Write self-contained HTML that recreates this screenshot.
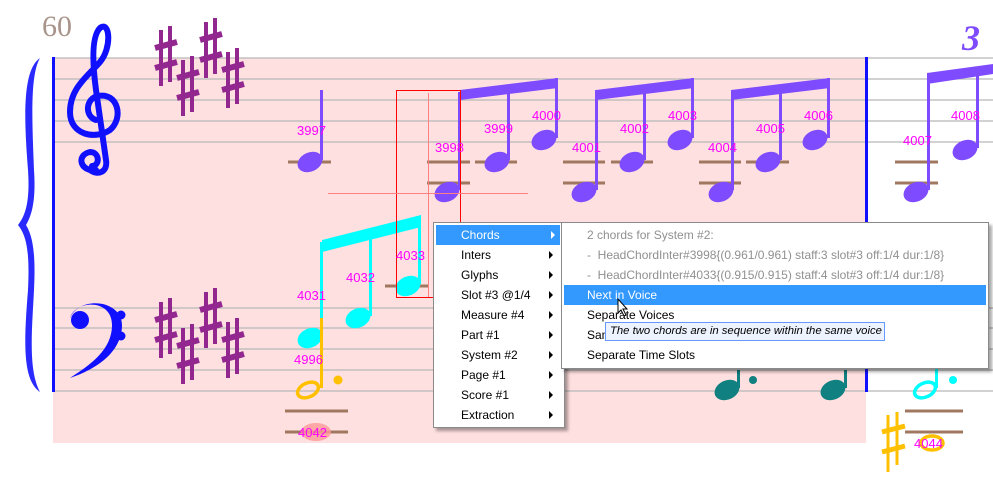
<!DOCTYPE html>
<html><head><style>
body{margin:0;width:993px;height:480px;overflow:hidden;background:#fff;font-family:"Liberation Sans",sans-serif}
svg{position:absolute;left:0;top:0}
.m{position:absolute;background:#fff;border:1px solid #8a8a8a;box-shadow:3px 3px 3px rgba(0,0,0,.35);font-size:12px;color:#000}
.it{position:absolute;height:20px;line-height:20px}
.ar{position:absolute;left:115px;top:6px;width:0;height:0;border-left:4px solid #000;border-top:4px solid transparent;border-bottom:4px solid transparent}
</style></head><body>
<svg width="993" height="480" viewBox="0 0 993 480">
<defs>
<g id="sh"><line x1="6" y1="0" x2="6" y2="56" stroke="#92278f" stroke-width="4"/><line x1="15" y1="-4" x2="15" y2="52" stroke="#92278f" stroke-width="4"/><line x1="0" y1="18" x2="22" y2="12" stroke="#92278f" stroke-width="6"/><line x1="0" y1="38" x2="22" y2="32" stroke="#92278f" stroke-width="6"/></g>
<ellipse id="nh" rx="13" ry="9.5" transform="rotate(-25)"/>
</defs>
<rect x="53" y="58" width="813" height="385" fill="#ffe0e0"/>
<g stroke="#b8b8b8" stroke-width="1.3">
<line x1="53" y1="58" x2="993" y2="58"/><line x1="53" y1="79" x2="993" y2="79"/><line x1="53" y1="100" x2="993" y2="100"/><line x1="53" y1="121" x2="993" y2="121"/><line x1="53" y1="142" x2="993" y2="142"/>
<line x1="53" y1="308" x2="993" y2="308"/><line x1="53" y1="328" x2="993" y2="328"/><line x1="53" y1="349" x2="993" y2="349"/><line x1="53" y1="370" x2="993" y2="370"/><line x1="53" y1="391" x2="993" y2="391"/>
</g>
<rect x="52" y="57" width="3" height="335" fill="#1010ff"/>
<rect x="865" y="57" width="3" height="335" fill="#1010ff"/>
<path d="M40 58 C22 70 24 120 28 170 C30 200 26 215 18 225 C26 235 30 250 28 290 C24 340 22 380 40 392 C28 370 32 330 34 290 C36 250 32 235 26 225 C32 215 36 200 34 170 C32 120 30 75 40 58Z" fill="#2a2aff"/>
<text x="42" y="36" font-family="Liberation Serif" font-size="30" fill="#a8948a">60</text>
<text x="962" y="50" font-family="Liberation Serif" font-size="36" font-weight="bold" font-style="italic" fill="#7f4bff">3</text>
<path d="M96 170 C80 172 76 155 90 152 C100 152 100 166 92 166 M100 28 C110 20 112 48 100 62 C88 76 70 88 70 112 C70 135 95 140 110 130 C124 118 118 92 98 96 C86 98 84 116 96 120 M100 28 C92 36 92 60 96 90 L106 160 C108 172 98 176 90 170" fill="none" stroke="#1010ff" stroke-width="6" stroke-linecap="round"/>
<path d="M70 318 C75 300 112 298 112 325 C112 350 90 365 70 378 C100 368 122 350 122 325 C122 300 80 295 70 318 Z" fill="#1010ff"/>
<circle cx="80" cy="320" r="9" fill="#1010ff"/>
<circle cx="121" cy="315" r="4.5" fill="#1010ff"/><circle cx="121" cy="336" r="4.5" fill="#1010ff"/>
<use href="#sh" x="155" y="30"/><use href="#sh" x="177" y="60"/><use href="#sh" x="200" y="22"/><use href="#sh" x="222" y="52"/>
<use href="#sh" x="155" y="302"/><use href="#sh" x="177" y="328"/><use href="#sh" x="200" y="292"/><use href="#sh" x="222" y="322"/>
<g stroke="#a07860" stroke-width="3">
<line x1="288" y1="162" x2="331" y2="162"/>
<line x1="427" y1="162" x2="470" y2="162"/><line x1="427" y1="183" x2="470" y2="183"/>
<line x1="475" y1="162" x2="517" y2="162"/>
<line x1="563" y1="162" x2="605" y2="162"/><line x1="563" y1="183" x2="605" y2="183"/>
<line x1="611" y1="162" x2="653" y2="162"/>
<line x1="699" y1="162" x2="741" y2="162"/><line x1="699" y1="183" x2="741" y2="183"/>
<line x1="746" y1="162" x2="789" y2="162"/>
<line x1="895" y1="162" x2="938" y2="162"/><line x1="895" y1="183" x2="938" y2="183"/>
<line x1="385" y1="286" x2="428" y2="286"/>
<line x1="285" y1="411" x2="348" y2="411"/><line x1="285" y1="432" x2="348" y2="432"/>
<line x1="905" y1="411" x2="963" y2="411"/><line x1="905" y1="432" x2="963" y2="432"/>
</g>
<g fill="#7f4bff">
<use href="#nh" x="310" y="162"/><rect x="320" y="90" width="3" height="70"/>
<use href="#nh" x="447" y="192"/><rect x="458" y="92" width="3" height="98"/>
<use href="#nh" x="497" y="162"/><rect x="507" y="85" width="3" height="75"/>
<use href="#nh" x="544" y="140"/><rect x="555" y="78" width="3" height="60"/>
<polygon points="460,90 558,78 558,88 460,100"/>
<use href="#nh" x="584" y="192"/><rect x="595" y="90" width="3" height="100"/>
<use href="#nh" x="632" y="162"/><rect x="643" y="85" width="3" height="75"/>
<use href="#nh" x="680" y="140"/><rect x="691" y="78" width="3" height="60"/>
<polygon points="596,90 694,78 694,88 596,100"/>
<use href="#nh" x="721" y="192"/><rect x="731" y="90" width="3" height="100"/>
<use href="#nh" x="768" y="162"/><rect x="779" y="85" width="3" height="75"/>
<use href="#nh" x="815" y="140"/><rect x="827" y="78" width="3" height="60"/>
<polygon points="731,90 830,78 830,88 731,100"/>
<use href="#nh" x="916" y="192"/><rect x="927" y="73" width="3" height="117"/>
<use href="#nh" x="965" y="150"/><rect x="976" y="68" width="3" height="80"/>
<polygon points="927,73 993,64 993,74 927,84"/>
</g>
<g fill="#00ffff">
<use href="#nh" x="310" y="338"/><rect x="320" y="242" width="3" height="78"/>
<use href="#nh" x="358" y="318"/><rect x="369" y="228" width="3" height="88"/>
<use href="#nh" x="408" y="286"/><rect x="418" y="218" width="3" height="66"/>
<polygon points="322,240 421,215 421,227 322,252"/>
<circle cx="953" cy="380" r="4"/>
</g>
<ellipse cx="925" cy="390" rx="11" ry="7" transform="rotate(-25 925 390)" fill="none" stroke="#00ffff" stroke-width="3.5"/>
<rect x="935" y="318" width="3" height="70" fill="#00ffff"/>
<ellipse cx="308" cy="390" rx="11" ry="7" transform="rotate(-25 308 390)" fill="none" stroke="#ffc000" stroke-width="3.5"/>
<rect x="320" y="318" width="3" height="70" fill="#ffc000"/><circle cx="338" cy="380" r="4.5" fill="#ffc000"/>
<ellipse cx="316" cy="432" rx="15" ry="9" fill="#ff9999" opacity=".8"/>
<g stroke="#ffc000"><line x1="888" y1="415" x2="888" y2="472" stroke-width="3"/><line x1="897" y1="412" x2="897" y2="465" stroke-width="3"/><line x1="882" y1="432" x2="905" y2="426" stroke-width="5"/><line x1="882" y1="452" x2="905" y2="446" stroke-width="5"/></g>
<ellipse cx="932" cy="443" rx="11" ry="7" fill="none" stroke="#ffc000" stroke-width="3.5"/>
<g fill="#108080"><use href="#nh" x="727" y="390"/><rect x="737" y="370" width="3" height="18"/><circle cx="753" cy="380" r="4"/>
<use href="#nh" x="833" y="390"/><rect x="844" y="370" width="3" height="18"/></g>
<rect x="396.5" y="90.5" width="64" height="207" fill="none" stroke="#ff0000" stroke-width="1"/>
<line x1="428.5" y1="93" x2="428.5" y2="297" stroke="#ff8080"/>
<line x1="328" y1="193.5" x2="528" y2="193.5" stroke="#ff8080"/>
<g font-size="13" fill="#ff00ff">
<text x="297" y="135">3997</text><text x="435" y="152">3998</text><text x="484" y="133">3999</text><text x="532" y="120">4000</text>
<text x="572" y="152">4001</text><text x="620" y="133">4002</text><text x="668" y="120">4003</text>
<text x="708" y="152">4004</text><text x="756" y="133">4005</text><text x="804" y="120">4006</text>
<text x="903" y="145">4007</text><text x="951" y="120">4008</text>
<text x="297" y="300">4031</text><text x="346" y="282">4032</text><text x="396" y="260">4033</text>
<text x="294" y="364">4996</text><text x="298" y="437">4042</text><text x="914" y="448">4044</text>
</g>
</svg>
<div class="m" style="left:433px;top:222px;width:130px;height:204px">
<div class="it" style="left:2px;top:2px;width:124px;background:#3399ff;color:#fff"><span style="margin-left:25px">Chords</span><div class="ar" style="border-left-color:#fff"></div></div>
<div class="it" style="left:27px;top:22px;width:100px">Inters<div class="ar" style="left:88px"></div></div>
<div class="it" style="left:27px;top:42px;width:100px">Glyphs<div class="ar" style="left:88px"></div></div>
<div class="it" style="left:27px;top:62px;width:100px">Slot #3 @1/4<div class="ar" style="left:88px"></div></div>
<div class="it" style="left:27px;top:82px;width:100px">Measure #4<div class="ar" style="left:88px"></div></div>
<div class="it" style="left:27px;top:102px;width:100px">Part #1<div class="ar" style="left:88px"></div></div>
<div class="it" style="left:27px;top:122px;width:100px">System #2<div class="ar" style="left:88px"></div></div>
<div class="it" style="left:27px;top:142px;width:100px">Page #1<div class="ar" style="left:88px"></div></div>
<div class="it" style="left:27px;top:162px;width:100px">Score #1<div class="ar" style="left:88px"></div></div>
<div class="it" style="left:27px;top:182px;width:100px">Extraction<div class="ar" style="left:88px"></div></div>
</div>
<div class="m" style="left:561px;top:222px;width:426px;height:145px">
<div class="it" style="left:25px;top:2px;color:#909090;white-space:nowrap">2 chords for System #2:</div>
<div class="it" style="left:25px;top:22px;color:#909090;white-space:nowrap">-&nbsp; HeadChordInter#3998{(0.961/0.961) staff:3 slot#3 off:1/4 dur:1/8}</div>
<div class="it" style="left:25px;top:42px;color:#909090;white-space:nowrap">-&nbsp; HeadChordInter#4033{(0.915/0.915) staff:4 slot#3 off:1/4 dur:1/8}</div>
<div class="it" style="left:2px;top:62px;width:422px;background:#3399ff;color:#fff"><span style="margin-left:23px">Next in Voice</span></div>
<div class="it" style="left:25px;top:82px">Separate Voices</div>
<div class="it" style="left:25px;top:102px">Same</div>
<div class="it" style="left:25px;top:122px">Separate Time Slots</div>
</div>
<div style="position:absolute;left:605px;top:322px;width:274px;height:17px;background:#eef4ff;border:1px solid #6699ff;font-size:11.3px;font-style:italic;line-height:17px;padding-left:4px;white-space:nowrap;overflow:hidden">The two chords are in sequence within the same voice</div>
<svg style="left:617px;top:298px" width="14" height="20"><path d="M1 1 L1 15 L4 12 L7 18 L9 17 L6 11 L10 11 Z" fill="#fff" stroke="#000"/></svg>
</body></html>
